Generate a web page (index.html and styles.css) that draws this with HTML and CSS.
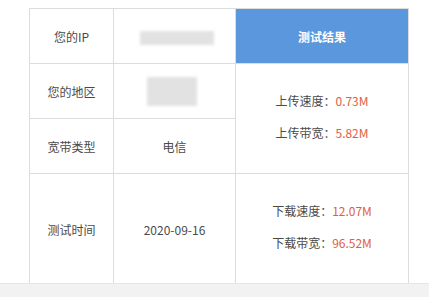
FILE: index.html
```html
<!DOCTYPE html>
<html>
<head>
    <meta charset="utf-8">
    <title>网速测试</title>
    <link rel="stylesheet" href="styles.css">
</head>
<body>
    <div class="result-box">
        <table class="result-table">
            <tr>
                <td class="label">您的IP</td>
                <td class="value"><span class="masked masked-ip"></span></td>
                <td class="head">测试结果</td>
            </tr>
            <tr>
                <td class="label">您的地区</td>
                <td class="value"><span class="masked masked-area"></span></td>
                <td class="speed" rowspan="2">
                    <p>上传速度：<em>0.73M</em></p>
                    <p>上传带宽：<em>5.82M</em></p>
                </td>
            </tr>
            <tr>
                <td class="label">宽带类型</td>
                <td class="value">电信</td>
            </tr>
            <tr class="tall">
                <td class="label">测试时间</td>
                <td class="value">2020-09-16</td>
                <td class="speed">
                    <p>下载速度：<em>12.07M</em></p>
                    <p>下载带宽：<em>96.52M</em></p>
                </td>
            </tr>
        </table>
    </div>
    <div class="footer-bar"></div>
</body>
</html>
```

FILE: styles.css
```css
body {
    margin: 0;
    background-color: #fff;
    font-family: "Microsoft YaHei", "Noto Sans CJK SC", sans-serif;
    font-size: 12px;
    color: #4a4a4a;
}

.result-box {
    padding: 8px 0 0 29px;
    height: 283px;
    box-sizing: border-box;
}

.result-table {
    border-collapse: collapse;
    table-layout: fixed;
    width: 380px;
}

.result-table td {
    border: 1px solid #dcdcdc;
    text-align: center;
    height: 54px;
    padding: 0;
}

.result-table tr.tall td {
    height: 106px;
}

.label {
    width: 83px;
}

.value {
    width: 121px;
}

.head {
    background-color: #5b97dc;
    color: #fff;
    font-weight: bold;
    border-color: #5b97dc;
}

.result-table td.speed {
    padding-bottom: 4px;
}

.speed p {
    margin: 0;
    line-height: 32px;
}

.speed em {
    font-style: normal;
    color: #e0603e;
}

/* grey placeholders where private values are hidden */
.masked {
    display: inline-block;
    vertical-align: middle;
    background-color: #e2e2e2;
    filter: blur(1.5px);
}

.masked-ip {
    width: 74px;
    height: 14px;
    margin-left: 4px;
}

.masked-area {
    width: 50px;
    height: 29px;
    margin-left: -6px;
}

.footer-bar {
    height: 14px;
    background-color: #f2f2f2;
    border-top: 1px solid #e6e6e6;
}
```
